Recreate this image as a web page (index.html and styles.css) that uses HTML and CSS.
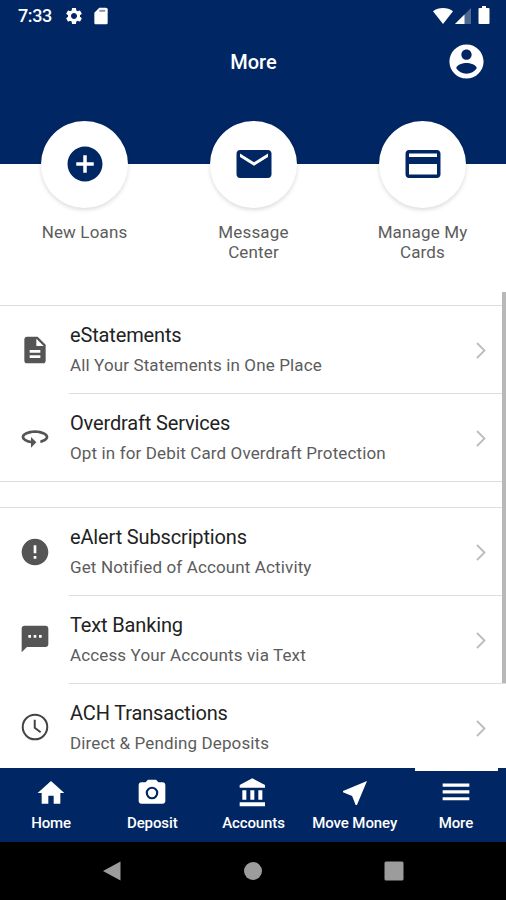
FILE: index.html
```html
<!DOCTYPE html>
<html lang="en">
<head>
    <meta charset="UTF-8">
    <meta name="viewport" content="width=device-width, initial-scale=1.0">
    <title>More</title>
    <link rel="stylesheet" href="styles.css">
</head>
<body>

<header>
    <div class="status-bar">
        <span class="time">7:33</span>
        <svg class="status-icon gear" viewBox="0 0 24 24"><path d="M19.14 12.94c.04-.3.06-.61.06-.94 0-.32-.02-.64-.07-.94l2.03-1.58c.18-.14.23-.41.12-.61l-1.92-3.32c-.12-.22-.37-.29-.59-.22l-2.39.96c-.5-.38-1.03-.7-1.62-.94l-.36-2.54c-.04-.24-.24-.41-.48-.41h-3.84c-.24 0-.43.17-.47.41l-.36 2.54c-.59.24-1.13.57-1.62.94l-2.39-.96c-.22-.08-.47 0-.59.22L2.74 8.87c-.12.21-.08.47.12.61l2.03 1.58c-.05.3-.09.63-.09.94s.02.64.07.94l-2.03 1.58c-.18.14-.23.41-.12.61l1.92 3.32c.12.22.37.29.59.22l2.39-.96c.5.38 1.03.7 1.62.94l.36 2.54c.05.24.24.41.48.41h3.84c.24 0 .44-.17.47-.41l.36-2.54c.59-.24 1.13-.56 1.62-.94l2.39.96c.22.08.47 0 .59-.22l1.92-3.32c.12-.22.07-.47-.12-.61l-2.01-1.58zM12 15.6c-1.98 0-3.6-1.62-3.6-3.6s1.62-3.6 3.6-3.6 3.6 1.62 3.6 3.6-1.62 3.6-3.6 3.6z"/></svg>
        <svg class="status-icon" viewBox="0 0 24 24"><path d="M18 2h-8L4 8v12c0 1.1.9 2 2 2h12c1.1 0 2-.9 2-2V4c0-1.1-.9-2-2-2z"/><path class="sd-pins" d="M10 4.500h7v2.500h-7z"/></svg>
        <div class="signals">
            <svg class="wifi" viewBox="0 0 20 16"><path d="M10 16L0 3.200C2.800 1 6.300 0 10 0s7.200 1 10 3.200z"/></svg>
            <svg class="cell" viewBox="0 0 16 16"><path class="cell-off" d="M16 0v16H0z"/><path d="M9.500 6.500V16H0z"/></svg>
            <svg class="battery" viewBox="0 0 12 18"><path d="M4 0h4v2h2.500q1 0 1 1v14q0 1-1 1h-9q-1 0-1-1V3q0-1 1-1H4z"/></svg>
        </div>
    </div>
    <div class="title-bar">
        <h1>More</h1>
        <svg class="profile" viewBox="0 0 24 24"><path d="M12 2C6.480 2 2 6.480 2 12s4.480 10 10 10 10-4.480 10-10S17.520 2 12 2zm0 3c1.660 0 3 1.340 3 3s-1.340 3-3 3-3-1.340-3-3 1.340-3 3-3zm0 14.200c-2.500 0-4.710-1.280-6-3.220.03-1.990 4-3.080 6-3.080 1.990 0 5.970 1.090 6 3.080-1.290 1.940-3.500 3.220-6 3.220z"/></svg>
    </div>
</header>

<section class="shortcuts">
    <a class="shortcut">
        <span class="circle"><svg viewBox="0 0 24 24"><path d="M12 2C6.480 2 2 6.480 2 12s4.480 10 10 10 10-4.480 10-10S17.520 2 12 2zm5 11h-4v4h-2v-4H7v-2h4V7h2v4h4v2z"/></svg></span>
        <span class="label">New Loans</span>
    </a>
    <a class="shortcut">
        <span class="circle"><svg viewBox="0 0 24 24"><path d="M20 4H4c-1.100 0-1.990.9-1.990 2L2 18c0 1.100.9 2 2 2h16c1.100 0 2-.9 2-2V6c0-1.100-.9-2-2-2zm0 4l-8 5-8-5V6l8 5 8-5v2z"/></svg></span>
        <span class="label">Message<br>Center</span>
    </a>
    <a class="shortcut">
        <span class="circle"><svg viewBox="0 0 24 24"><path d="M20 4H4c-1.110 0-1.990.89-1.990 2L2 18c0 1.110.89 2 2 2h16c1.110 0 2-.89 2-2V6c0-1.110-.89-2-2-2zm0 14H4v-6h16v6zm0-10H4V6h16v2z"/></svg></span>
        <span class="label">Manage My<br>Cards</span>
    </a>
</section>

<main>
    <ul class="menu">
        <li>
            <svg class="icon" viewBox="0 0 24 24"><path d="M14 2H6c-1.100 0-1.990.9-1.990 2L4 20c0 1.100.89 2 1.990 2H18c1.100 0 2-.9 2-2V8l-6-6zm2 16H8v-2h8v2zm0-4H8v-2h8v2zm-3-5V3.500L18.500 9H13z"/></svg>
            <div class="item">
                <div><h2>eStatements</h2><p>All Your Statements in One Place</p></div>
                <svg class="chevron" viewBox="0 0 10 17"><path d="M1 1l7.500 7.500L1 16"/></svg>
            </div>
        </li>
        <li>
            <svg class="icon" viewBox="0 0 24 24"><path d="M12 7C6.480 7 2 9.240 2 12c0 2.240 2.940 4.130 7 4.770V20l4-4-4-4v2.730c-3.150-.56-5-1.900-5-2.730 0-1.060 3.040-3 8-3s8 1.940 8 3c0 .73-1.460 1.890-4 2.530v2.050c3.530-.77 6-2.530 6-4.580 0-2.760-4.480-5-10-5z"/></svg>
            <div class="item">
                <div><h2>Overdraft Services</h2><p>Opt in for Debit Card Overdraft Protection</p></div>
                <svg class="chevron" viewBox="0 0 10 17"><path d="M1 1l7.500 7.500L1 16"/></svg>
            </div>
        </li>
    </ul>
    <ul class="menu">
        <li>
            <svg class="icon" viewBox="0 0 24 24"><path d="M12 2C6.480 2 2 6.480 2 12s4.480 10 10 10 10-4.480 10-10S17.520 2 12 2zm1 15h-2v-2h2v2zm0-4h-2V7h2v6z"/></svg>
            <div class="item">
                <div><h2>eAlert Subscriptions</h2><p>Get Notified of Account Activity</p></div>
                <svg class="chevron" viewBox="0 0 10 17"><path d="M1 1l7.500 7.500L1 16"/></svg>
            </div>
        </li>
        <li>
            <svg class="icon" viewBox="0 0 24 24"><path d="M20 2H4c-1.100 0-1.990.9-1.990 2L2 22l4-4h14c1.100 0 2-.9 2-2V4c0-1.100-.9-2-2-2zM9 11H7V9h2v2zm4 0h-2V9h2v2zm4 0h-2V9h2v2z"/></svg>
            <div class="item">
                <div><h2>Text Banking</h2><p>Access Your Accounts via Text</p></div>
                <svg class="chevron" viewBox="0 0 10 17"><path d="M1 1l7.500 7.500L1 16"/></svg>
            </div>
        </li>
        <li>
            <svg class="icon clock" viewBox="0 0 24 24"><circle cx="12" cy="12" r="9.200"/><path d="M11.800 6.500v6l4.400 3.400"/></svg>
            <div class="item">
                <div><h2>ACH Transactions</h2><p>Direct &amp; Pending Deposits</p></div>
                <svg class="chevron" viewBox="0 0 10 17"><path d="M1 1l7.500 7.500L1 16"/></svg>
            </div>
        </li>
    </ul>
    <div class="scrollbar"></div>
</main>

<nav>
    <a><svg viewBox="0 0 24 24"><path d="M10 20v-6h4v6h5v-8h3L12 3 2 12h3v8z"/></svg>Home</a>
    <a><svg viewBox="0 0 24 24"><path d="M9 2L7.170 4H4c-1.100 0-2 .9-2 2v12c0 1.100.9 2 2 2h16c1.100 0 2-.9 2-2V6c0-1.100-.9-2-2-2h-3.170L15 2H9z"/><circle class="lens" cx="12" cy="12" r="3.900"/></svg>Deposit</a>
    <a><svg viewBox="0 0 24 24"><path d="M4 10v7h3v-7H4zm6 0v7h3v-7h-3zM2 22h19v-3H2v3zm14-12v7h3v-7h-3zm-4.500-9L2 6v2h19V6l-9.500-5z"/></svg>Accounts</a>
    <a><svg viewBox="0 0 24 24"><path d="M21 3L3 10.530v.98l6.840 2.650L12.480 21h.98L21 3z"/></svg>Move Money</a>
    <a class="active"><svg viewBox="0 0 24 24"><path d="M2 4.900h20v2.400H2zm0 5.100h20v2.400H2zm0 5.100h20v2.400H2z"/></svg>More</a>
</nav>

<footer>
    <svg viewBox="0 0 20 22"><path d="M18.500 1.500v19L1 11z"/></svg>
    <svg viewBox="0 0 20 22"><circle cx="10" cy="11" r="9"/></svg>
    <svg viewBox="0 0 20 22"><rect x="0.500" y="1.500" width="19" height="19" rx="1.500"/></svg>
</footer>

</body>
</html>
```
FILE: styles.css
```css
body {
    font-family: Roboto, sans-serif;
    margin: 0;
    height: 900px;
    display: flex;
    flex-direction: column;
    overflow: hidden;
    background-color: #fff;
}
svg {
    display: block;
    flex: none;
}
header {
    background-color: #002663;
    color: #fff;
    fill: #fff;
    height: 164px;
    flex: none;
}
.status-bar {
    display: flex;
    align-items: center;
    height: 31px;
    padding: 0 16px 0 18px;
}
.time {
    font-size: 18px;
    font-weight: 500;
    letter-spacing: -0.4px;
    width: 46px;
}
.status-icon {
    width: 20px;
    height: 20px;
}
.gear {
    margin-right: 7px;
}
.sd-pins {
    fill: #8a96b4;
}
.signals {
    margin-left: auto;
    display: flex;
    align-items: center;
}
.wifi {
    width: 20px;
    height: 16px;
}
.cell {
    width: 16px;
    height: 16px;
    margin: 1px 7px 0 2px;
}
.cell-off {
    fill: #4d6791;
}
.battery {
    width: 12px;
    height: 18px;
    margin-bottom: 1px;
}
.title-bar {
    display: grid;
    grid-template-columns: 1fr auto 1fr;
    align-items: center;
    height: 60px;
    padding: 0 19px 0 20px;
}
h1 {
    grid-column: 2;
    font-size: 20px;
    font-weight: 500;
    margin: 1px 0 0;
}
.profile {
    width: 41px;
    height: 41px;
    justify-self: end;
}
.shortcuts {
    display: grid;
    grid-template-columns: repeat(3, 169px);
    height: 171px;
    margin-top: -43px;
    flex: none;
}
.shortcut {
    display: flex;
    flex-direction: column;
    align-items: center;
}
.circle {
    display: flex;
    align-items: center;
    justify-content: center;
    width: 87px;
    height: 87px;
    border-radius: 50%;
    background-color: #fff;
    fill: #002663;
    box-shadow: 0 2px 4px rgba(0, 0, 0, 0.14);
}
.circle svg {
    width: 42px;
    height: 42px;
    margin-bottom: 2px;
}
.label {
    margin-top: 14px;
    font-size: 17px;
    line-height: 20px;
    letter-spacing: 0.15px;
    text-align: center;
    color: #5c5c5c;
}
main {
    flex: 1;
    position: relative;
    padding-top: 13px;
    overflow: hidden;
}
.menu {
    list-style-type: none;
    margin: 0 0 25px;
    padding: 0;
    border-top: 1px solid #dedede;
    border-bottom: 1px solid #dedede;
}
.menu li {
    display: flex;
    align-items: center;
    height: 87px;
}
.menu li + li {
    height: 88px;
}
.icon {
    width: 32px;
    height: 32px;
    margin: 0 18px 0 19px;
    fill: #555;
}
.clock {
    fill: none;
    stroke: #444;
    stroke-width: 1.5;
}
.item {
    flex: 1;
    display: flex;
    align-items: center;
    justify-content: space-between;
    height: 100%;
    box-sizing: border-box;
    padding: 0 20px 1px 0;
}
li + li .item {
    border-top: 1px solid #dedede;
}
h2 {
    font-size: 20px;
    font-weight: 400;
    line-height: 24px;
    letter-spacing: -0.15px;
    color: #222;
    margin: 0 0 8px;
}
p {
    font-size: 17px;
    line-height: 20px;
    letter-spacing: 0.13px;
    color: #5c5c5c;
    margin: 0 0 1px;
}
.item h2, .item p {
    padding-left: 1px;
}
.chevron {
    width: 10px;
    height: 17px;
    margin-top: 2px;
    fill: none;
    stroke: #bcbcbc;
    stroke-width: 1.8;
}
.scrollbar {
    position: absolute;
    top: 0;
    right: 0;
    width: 4px;
    height: 391px;
    background-color: #b8b8b8;
}
nav {
    display: grid;
    grid-template-columns: repeat(5, 1fr);
    height: 74px;
    flex: none;
    background-color: #002663;
    color: #fff;
    fill: #fff;
}
nav a {
    display: flex;
    flex-direction: column;
    align-items: center;
    padding: 9px 0 0 1px;
    position: relative;
    font-size: 15px;
    font-weight: 500;
    line-height: 18px;
    letter-spacing: -0.1px;
    white-space: nowrap;
}
nav svg {
    width: 32px;
    height: 32px;
    margin-bottom: 5px;
}
.lens {
    stroke: #002663;
    stroke-width: 1.6;
}
.active::before {
    content: "";
    position: absolute;
    top: 0;
    left: 10px;
    width: 83px;
    height: 3px;
    background-color: #fff;
}
footer {
    display: flex;
    justify-content: center;
    gap: 121px;
    height: 58px;
    flex: none;
    align-items: center;
    background-color: #000;
    fill: #9c9c9c;
}
footer svg {
    width: 20px;
    height: 22px;
}
```
